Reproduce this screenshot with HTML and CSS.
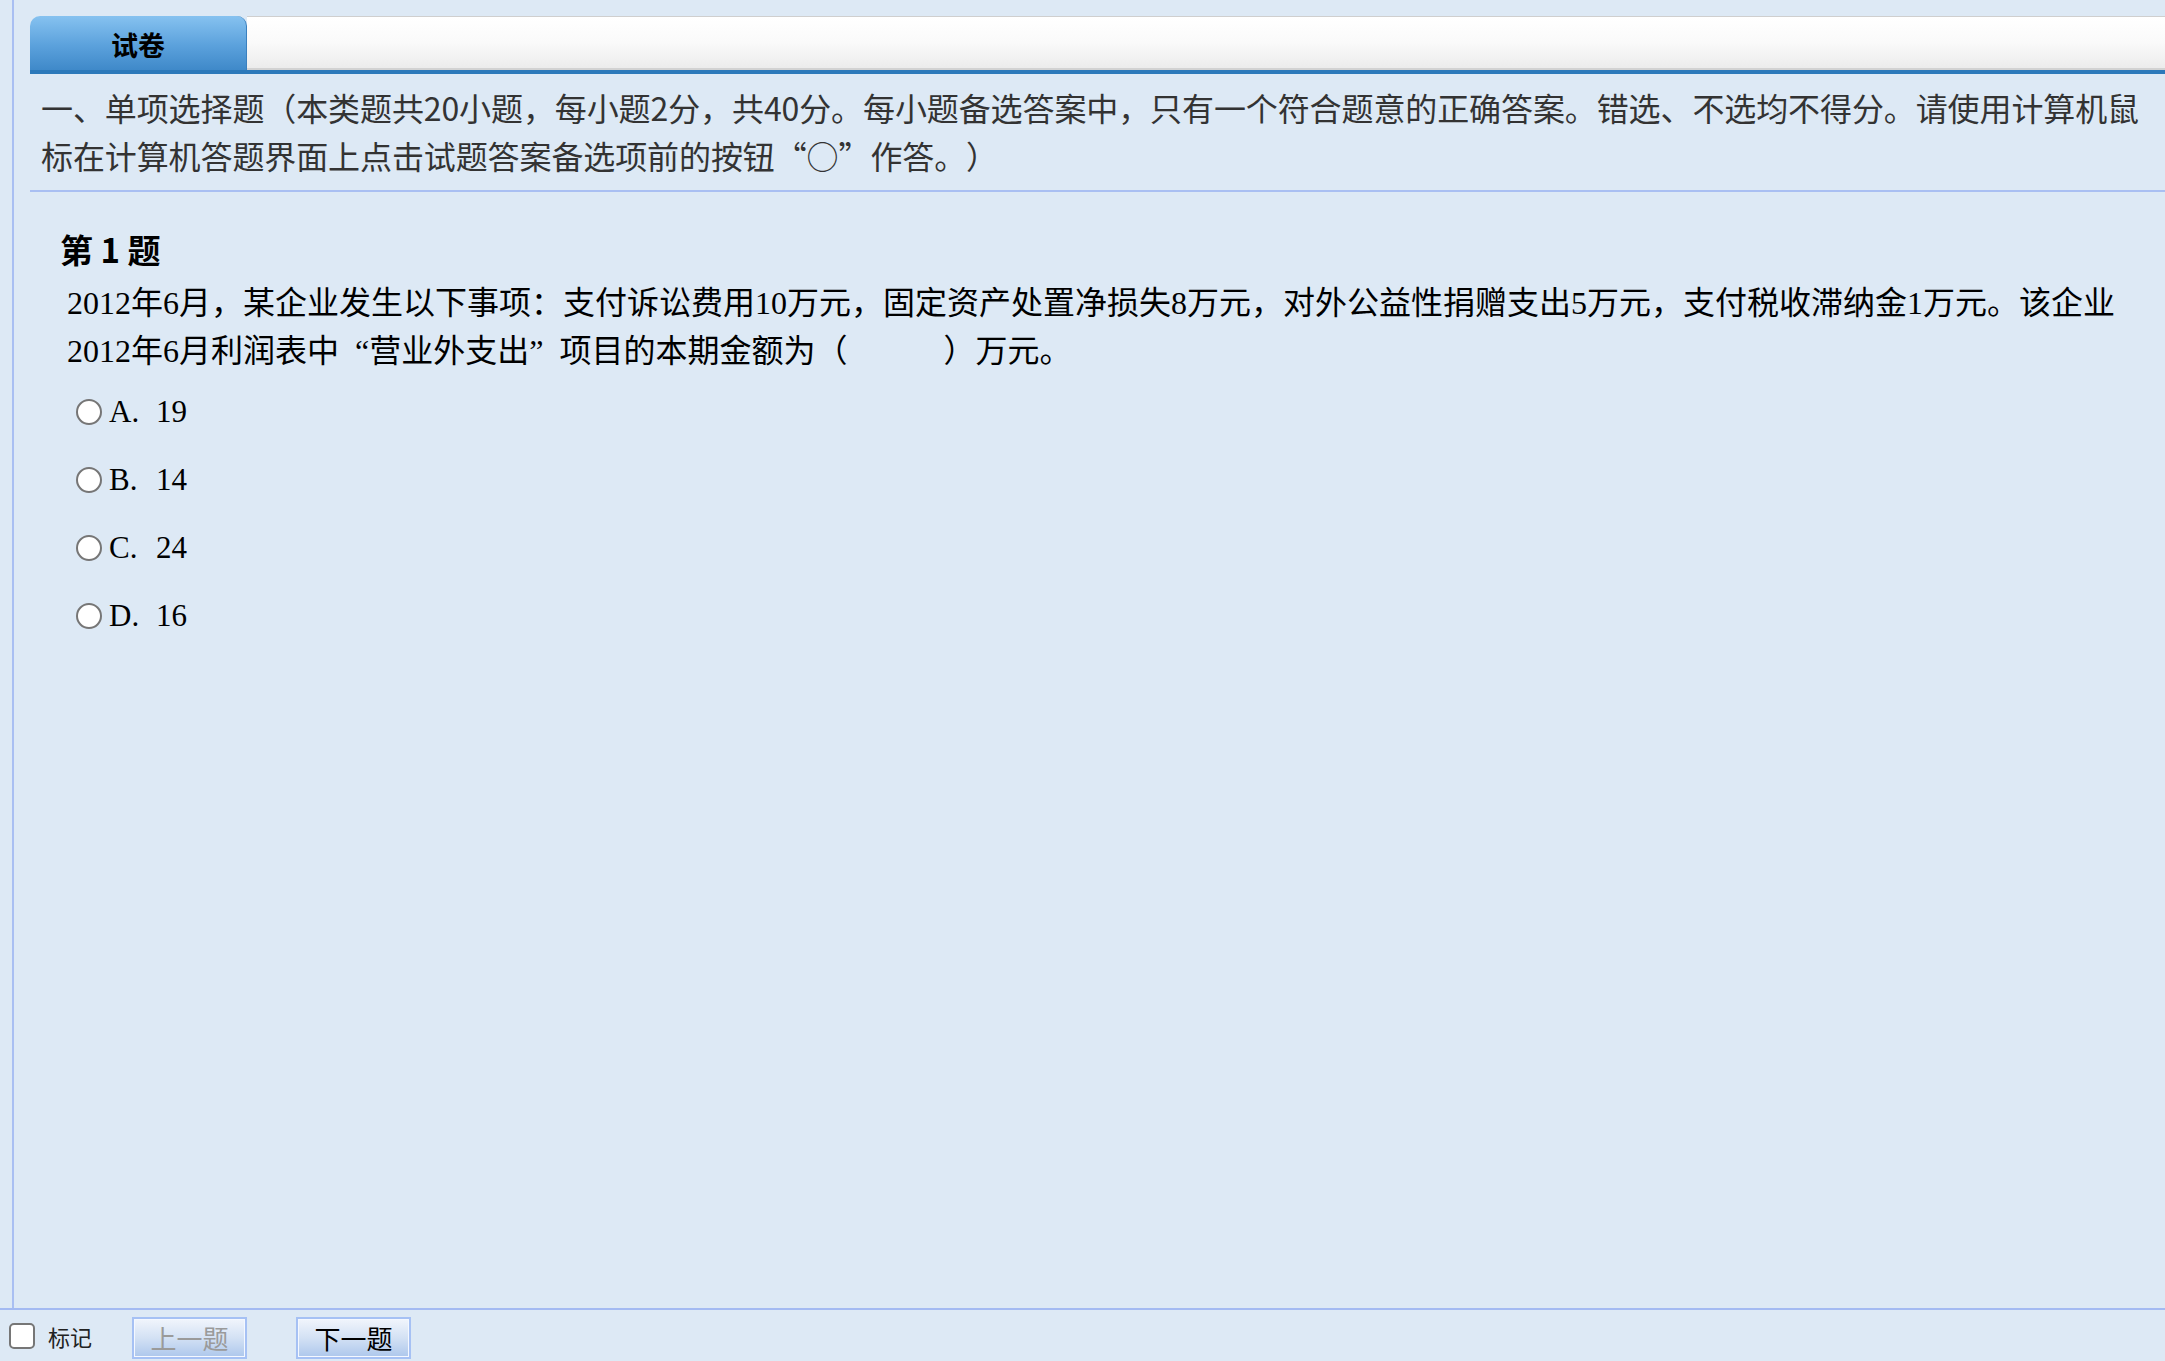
FILE: index.html
```html
<!DOCTYPE html>
<html lang="zh-CN">
<head>
    <meta charset="UTF-8">
    <title>试卷</title>
    <link rel="stylesheet" href="styles.css">
</head>
<body>
    <div class="page">
        <div class="main">
            <div class="tabbar">
                <div class="tab">试卷</div>
                <div class="tab-fill"></div>
            </div>
            <div class="section-note">一、单项选择题（本类题共20小题，每小题2分，共40分。每小题备选答案中，只有一个符合题意的正确答案。错选、不选均不得分。请使用计算机鼠标在计算机答题界面上点击试题答案备选项前的按钮“○”作答。）</div>
            <div class="question">
                <div class="q-title">第 1 题</div>
                <div class="q-text">2012年6月，某企业发生以下事项：支付诉讼费用10万元，固定资产处置净损失8万元，对外公益性捐赠支出5万元，支付税收滞纳金1万元。该企业2012年6月利润表中&ensp;“营业外支出”&ensp;项目的本期金额为（　　　）万元。</div>
                <div class="options">
                    <label class="option"><input type="radio" name="q1"><span class="opt-key">A.</span>19</label>
                    <label class="option"><input type="radio" name="q1"><span class="opt-key">B.</span>14</label>
                    <label class="option"><input type="radio" name="q1"><span class="opt-key">C.</span>24</label>
                    <label class="option"><input type="radio" name="q1"><span class="opt-key">D.</span>16</label>
                </div>
            </div>
        </div>
        <div class="footer">
            <label class="mark"><input type="checkbox">标记</label>
            <button class="nav-btn" disabled>上一题</button>
            <button class="nav-btn">下一题</button>
        </div>
    </div>
</body>
</html>
```

FILE: styles.css
```css
html, body {
    margin: 0;
    padding: 0;
    height: 100%;
}
body {
    background-color: #dde9f5;
    font-family: "Noto Sans CJK SC", sans-serif;
    color: #333;
    overflow: hidden;
    text-spacing-trim: space-all;
}
.page {
    display: flex;
    flex-direction: column;
    height: 100vh;
}
.main {
    flex: 1;
    margin-left: 12px;
    border-left: 2px solid #a9bff2;
    padding: 16px 0 0 16px;
    min-height: 0;
}
.tabbar {
    display: flex;
    height: 54px;
    border-bottom: 4px solid #2c79ba;
}
.tab {
    width: 217px;
    display: flex;
    align-items: center;
    justify-content: center;
    padding-top: 2px;
    font-size: 27px;
    font-weight: bold;
    color: #000;
    background: linear-gradient(#86c2f0, #5ba1dc 55%, #3f89c9);
    border-radius: 10px 10px 0 0;
    border-right: 1px solid #3a80bf;
    box-sizing: border-box;
}
.tab-fill {
    flex: 1;
    border-top: 1px solid #cfcfcf;
    border-bottom: 2px solid #d2d2d2;
    background: linear-gradient(#ffffff, #fafafa 50%, #ececec);
}
.section-note {
    font-size: 32px;
    line-height: 48px;
    letter-spacing: -0.1px;
    color: #333;
    padding: 9px 0 11px 11px;
    border-bottom: 2px solid #a9bff2;
}
.question {
    padding: 37px 0 0 30px;
}
.q-title {
    font-size: 33px;
    font-weight: bold;
    line-height: 40px;
    color: #000;
}
.q-text {
    margin-top: 10px;
    padding-left: 7px;
    font-family: "Liberation Serif", "Noto Sans CJK SC", serif;
    font-size: 32px;
    line-height: 48px;
    color: #000;
}
.options {
    margin-top: 3px;
}
.option {
    display: flex;
    align-items: center;
    height: 68px;
    padding-left: 16px;
    font-family: "Liberation Serif", serif;
    font-size: 31px;
    color: #000;
}
.option input {
    appearance: none;
    width: 26px;
    height: 26px;
    margin: 0 7px 0 0;
    border: 2px solid #767676;
    border-radius: 50%;
    background: #fff;
    box-sizing: border-box;
}
.opt-key {
    display: inline-block;
    width: 47px;
}
.footer {
    height: 51px;
    border-top: 2px solid #a3baf2;
    display: flex;
    align-items: center;
}
.mark {
    display: flex;
    align-items: center;
    font-size: 22px;
    color: #222;
    margin-left: 9px;
    width: 123px;
}
.mark input {
    appearance: none;
    width: 26px;
    height: 26px;
    margin: 0 13px 0 0;
    border: 2px solid #767676;
    border-radius: 5px;
    background: #fff;
    box-sizing: border-box;
}
.nav-btn {
    width: 115px;
    height: 42px;
    margin-right: 49px;
    margin-top: 4px;
    font-family: "Noto Sans CJK SC", sans-serif;
    font-size: 26px;
    color: #000;
    border: 2px solid #a6c1f4;
    box-shadow: inset 0 0 0 1px #f4f8ff;
    background: linear-gradient(#f1f5fc, #d3e1f4 50%, #adc7ec);
    padding: 0;
}
.nav-btn:disabled {
    color: #9a9a9a;
}
```
